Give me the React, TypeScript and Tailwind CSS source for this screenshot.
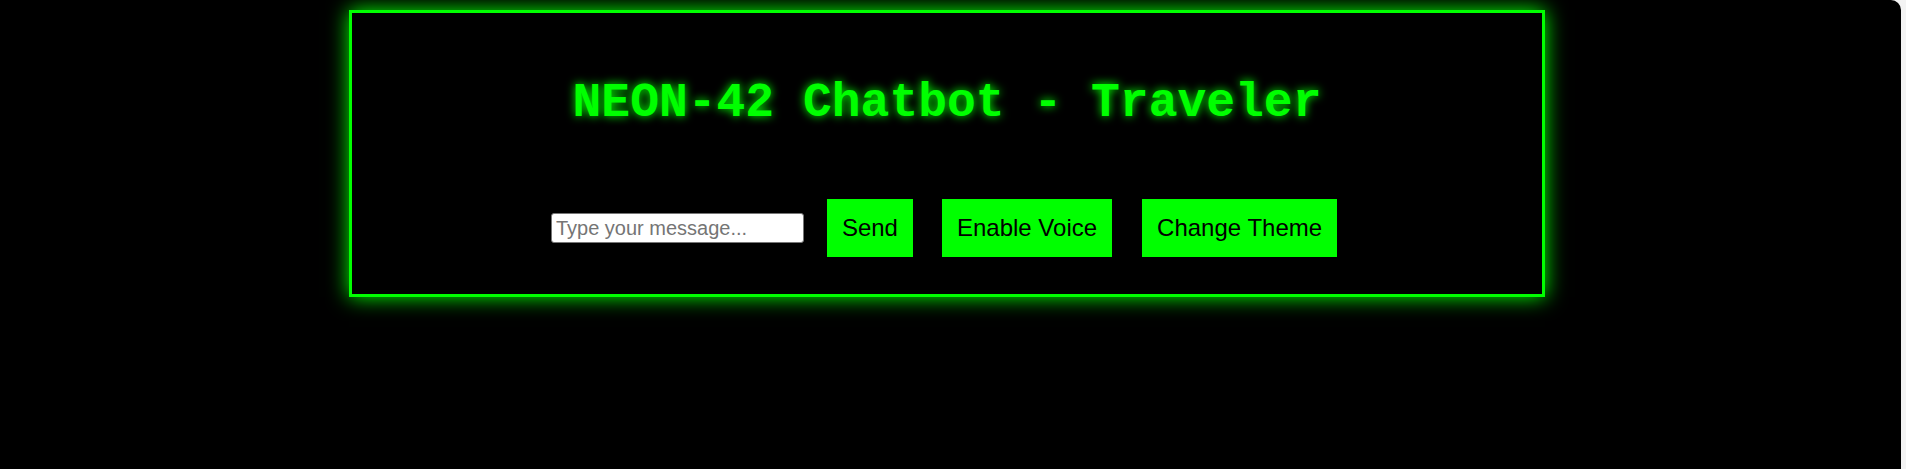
import React from "react";

export default function App() {
  return (
    <div className="flex h-[469px] w-full bg-[#f3f3f3] overflow-hidden">
      <div className="h-full w-[1901px] shrink-0 rounded-tr-[10px] bg-black pl-[349px] pt-[10px]">
        <div className="flex h-[287px] w-[1196px] flex-col items-center border-[3px] border-[#00ff00] bg-black shadow-[0_0_20px_#00ff00]">
          <h1
            className="mt-[61px] text-[48px] font-bold leading-[59px] text-[#00ff00] [text-shadow:0_0_10px_#00ff00]"
            style={{ fontFamily: '"Liberation Mono", "Courier New", monospace' }}
          >
            NEON-42 Chatbot - Traveler
          </h1>
          <div
            className="mt-[66px] flex items-center pr-[6px]"
            style={{ fontFamily: '"Liberation Sans", Arial, sans-serif' }}
          >
            <input
              type="text"
              placeholder="Type your message..."
              className="h-[30px] w-[253px] rounded-[3px] border border-[#767676] bg-white px-[4px] text-[20px] text-black placeholder:text-[#757575] outline-none"
            />
            <button className="ml-[23px] h-[58px] bg-[#00ff00] px-[15px] text-[24px] text-black">
              Send
            </button>
            <button className="ml-[29px] h-[58px] bg-[#00ff00] px-[15px] text-[24px] text-black">
              Enable Voice
            </button>
            <button className="ml-[30px] h-[58px] bg-[#00ff00] px-[15px] text-[24px] text-black">
              Change Theme
            </button>
          </div>
        </div>
      </div>
    </div>
  );
}
